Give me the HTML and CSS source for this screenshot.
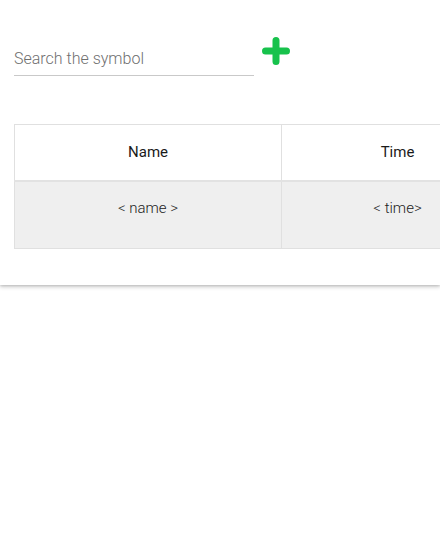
FILE: index.html
```html
<!DOCTYPE html>
<html>
<head>
<meta charset="utf-8">
<link rel="stylesheet" href="styles.css">
</head>
<body>
<div class="card">
  <div class="search-row">
    <input class="search" type="text" placeholder="Search the symbol">
    <button class="add" aria-label="Add">
      <svg width="30" height="30" viewBox="0 0 30 30"><path d="M15 4.5 V25.5 M4.5 15 H25.5" stroke="#17c24c" stroke-width="7" stroke-linecap="round" fill="none"/></svg>
    </button>
  </div>
  <div class="table-wrap">
    <table class="grid">
      <colgroup><col class="c1"><col class="c2"></colgroup>
      <thead>
        <tr><th>Name</th><th>Time</th></tr>
      </thead>
      <tbody>
        <tr><td>&lt; name &gt;</td><td>&lt; time&gt;</td></tr>
      </tbody>
    </table>
  </div>
</div>
</body>
</html>
```
FILE: styles.css
```css
html, body { margin: 0; padding: 0; background: #fff; }
body { font-family: Roboto, "Noto Sans", sans-serif; width: 440px; height: 538px; overflow: hidden; }
.card {
  width: 100%;
  height: 285px;
  background: #fff;
  box-shadow: 0 2px 4px rgba(0,0,0,0.2), 0 1px 2px rgba(0,0,0,0.1);
  padding: 0 0 0 14px;
  box-sizing: border-box;
}
.search-row {
  display: flex;
  align-items: flex-start;
  padding-top: 36px;
  height: 88px;
  box-sizing: border-box;
}
.search {
  width: 240px;
  height: 40px;
  border: none;
  border-bottom: 1px solid #c9c9c9;
  outline: none;
  padding: 6px 0 0 0;
  font-family: Roboto, sans-serif;
  font-weight: 300;
  font-size: 16px;
  color: #333;
  box-sizing: border-box;
  background: transparent;
}
.search::placeholder { color: #6f6f6f; }
.add {
  border: none;
  background: none;
  padding: 0;
  margin-left: 7px;
  width: 30px;
  height: 30px;
  flex: none;
  cursor: pointer;
}
.add svg { display: block; }
.table-wrap {
  margin-top: 36px;
  overflow: hidden;
}
.grid {
  border-collapse: collapse;
  table-layout: fixed;
  width: 499px;
  font-size: 15px;
}
.grid col.c1 { width: 267px; }
.grid col.c2 { width: 232px; }
.grid th, .grid td {
  border: 1px solid #e0e0e0;
  text-align: center;
}
.grid th {
  height: 53px;
  font-weight: 400;
  color: #1a1a1a;
  background: #fff;
  border-bottom: 2px solid #e2e2e2;
  padding: 0 0 2px 0;
}
.grid td {
  height: 67px;
  vertical-align: top;
  padding: 17px 0 0 0;
  box-sizing: border-box;
  background: #efefef;
  color: #222;
  font-weight: 300;
}
```
